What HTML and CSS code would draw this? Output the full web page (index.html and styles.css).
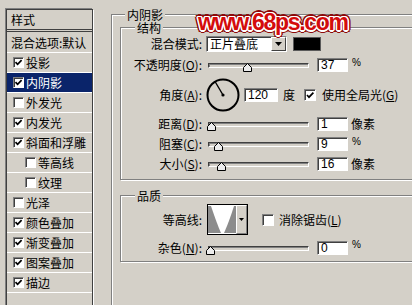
FILE: index.html
```html
<!DOCTYPE html>
<html lang="zh-CN">
<head>
<meta charset="utf-8">
<title>图层样式 - 内阴影</title>
<link rel="stylesheet" href="styles.css">
</head>
<body>
<div class="dialog">
  <div class="styles-list">
    <div class="list-head">样式</div>
    <div class="row blend">混合选项:默认</div>
    <div class="row"><span class="cb"><svg viewBox="0 0 9 9"><path d="M1.5 4.2 L3.6 6.3 L7.6 2.2"/></svg></span>投影</div>
    <div class="row sel"><span class="cb"><svg viewBox="0 0 9 9"><path d="M1.5 4.2 L3.6 6.3 L7.6 2.2"/></svg></span>内阴影</div>
    <div class="row"><span class="cb"></span>外发光</div>
    <div class="row"><span class="cb"><svg viewBox="0 0 9 9"><path d="M1.5 4.2 L3.6 6.3 L7.6 2.2"/></svg></span>内发光</div>
    <div class="row"><span class="cb"><svg viewBox="0 0 9 9"><path d="M1.5 4.2 L3.6 6.3 L7.6 2.2"/></svg></span>斜面和浮雕</div>
    <div class="row sub"><span class="cb"></span>等高线</div>
    <div class="row sub"><span class="cb"></span>纹理</div>
    <div class="row"><span class="cb"></span>光泽</div>
    <div class="row"><span class="cb"><svg viewBox="0 0 9 9"><path d="M1.5 4.2 L3.6 6.3 L7.6 2.2"/></svg></span>颜色叠加</div>
    <div class="row"><span class="cb"><svg viewBox="0 0 9 9"><path d="M1.5 4.2 L3.6 6.3 L7.6 2.2"/></svg></span>渐变叠加</div>
    <div class="row"><span class="cb"><svg viewBox="0 0 9 9"><path d="M1.5 4.2 L3.6 6.3 L7.6 2.2"/></svg></span>图案叠加</div>
    <div class="row"><span class="cb"><svg viewBox="0 0 9 9"><path d="M1.5 4.2 L3.6 6.3 L7.6 2.2"/></svg></span>描边</div>
  </div>

  <div class="main">
    <div class="group outer">
      <div class="legend">内阴影</div>

      <div class="group inner struct">
        <div class="legend">结构</div>

        <div class="frow r-mode">
          <div class="lab">混合模式:</div>
          <div class="select"><span class="sval">正片叠底</span><span class="sbtn"><svg viewBox="0 0 7 4"><path d="M0 0 H7 L3.5 4 Z"/></svg></span></div>
          <div class="swatch"></div>
        </div>

        <div class="frow r-std">
          <div class="lab">不透明度(<u>O</u>):</div>
          <div class="slider"><div class="track"></div><svg class="thumb" style="left:35px" viewBox="0 0 9 9"><path d="M4.5 0.5 L8.5 4.5 V8.5 H0.5 V4.5 Z"/></svg></div>
          <div class="field">37</div>
          <div class="unit pct">%</div>
        </div>

        <div class="frow r-angle">
          <div class="lab">角度(<u>A</u>):</div>
          <svg class="dial" viewBox="0 0 34 34"><circle cx="17" cy="17" r="15.5"/><line x1="17" y1="17" x2="9" y2="3.5"/><circle class="dot" cx="17" cy="17" r="1.6"/></svg>
          <div class="field angle">120</div>
          <div class="unit deg">度</div>
          <span class="cb big"><svg viewBox="0 0 10 10"><path d="M2 5 L4 7.2 L8.4 2.6"/></svg></span>
          <div class="cblab">使用全局光(<u>G</u>)</div>
        </div>

        <div class="frow r-std">
          <div class="lab">距离(<u>D</u>):</div>
          <div class="slider"><div class="track"></div><svg class="thumb" style="left:-1px" viewBox="0 0 9 9"><path d="M4.5 0.5 L8.5 4.5 V8.5 H0.5 V4.5 Z"/></svg></div>
          <div class="field">1</div>
          <div class="unit px">像素</div>
        </div>

        <div class="frow r-std">
          <div class="lab">阻塞(<u>C</u>):</div>
          <div class="slider"><div class="track"></div><svg class="thumb" style="left:6px" viewBox="0 0 9 9"><path d="M4.5 0.5 L8.5 4.5 V8.5 H0.5 V4.5 Z"/></svg></div>
          <div class="field">9</div>
          <div class="unit pct">%</div>
        </div>

        <div class="frow r-std">
          <div class="lab">大小(<u>S</u>):</div>
          <div class="slider"><div class="track"></div><svg class="thumb" style="left:9px" viewBox="0 0 9 9"><path d="M4.5 0.5 L8.5 4.5 V8.5 H0.5 V4.5 Z"/></svg></div>
          <div class="field">16</div>
          <div class="unit px">像素</div>
        </div>
      </div>

      <div class="group inner quality">
        <div class="legend">品质</div>

        <div class="frow r-contour">
          <div class="lab">等高线:</div>
          <div class="contour">
            <span class="cprev"><svg viewBox="0 0 28 27"><rect width="28" height="27" fill="#8c8c8c"/><path d="M3 0 Q9 18 13 27 L16 27 Q21 16 26 0 Z" fill="#fff"/></svg></span>
            <span class="cbtn"><svg viewBox="0 0 5 3"><path d="M0 0 H5 L2.5 3 Z"/></svg></span>
          </div>
          <span class="cb big anti"></span>
          <div class="cblab">消除锯齿(<u>L</u>)</div>
        </div>

        <div class="frow r-noise">
          <div class="lab">杂色(<u>N</u>):</div>
          <div class="slider"><div class="track"></div><svg class="thumb" style="left:-2px" viewBox="0 0 9 9"><path d="M4.5 0.5 L8.5 4.5 V8.5 H0.5 V4.5 Z"/></svg></div>
          <div class="field">0</div>
          <div class="unit pct">%</div>
        </div>
      </div>
    </div>
  </div>

  <div class="watermark">www.68ps.com</div>
</div>
</body>
</html>
```

FILE: styles.css
```css
* { box-sizing: border-box; }
html, body { margin: 0; padding: 0; }
body {
  width: 412px;
  height: 305px;
  overflow: hidden;
  background: #d4d0c8;
  font-family: "Noto Sans CJK SC", "Liberation Sans", sans-serif;
  font-size: 12px;
  color: #000;
}
.dialog {
  position: relative;
  display: flex;
  align-items: flex-start;
  width: 412px;
  height: 305px;
  overflow: hidden;
}

/* ---------- left style list ---------- */
.styles-list {
  flex: none;
  margin: 9px 0 0 6px;
  width: 87px;
  height: 320px;
  border: 1px solid #404040;
  box-shadow: -1px -1px 0 #808080, 1px 1px 0 #ffffff;
}
.list-head {
  height: 22px;
  line-height: 19px;
  padding-left: 4px;
  border-bottom: 3px double #404040;
}
.row {
  display: flex;
  align-items: center;
  height: 20px;
  padding-left: 6px;
  border-bottom: 1px solid #ffffff;
  line-height: 19px;
  white-space: nowrap;
}
.row.blend { height: 21px; padding-left: 4px; }
.row.sub { padding-left: 18px; }
.row.sel { background: #0a246a; color: #ffffff; }

.cb {
  flex: none;
  display: block;
  width: 11px;
  height: 11px;
  margin-right: 2px;
  background: #ffffff;
  border: 1px solid;
  border-color: #808080 #ffffff #ffffff #808080;
  box-shadow: inset 1px 1px 0 #404040;
}
.cb svg { display: block; width: 9px; height: 9px; }
.cb path { fill: none; stroke: #000; stroke-width: 1.7; }
.cb.big { width: 12px; height: 12px; margin-right: 0; }
.cb.big svg { width: 10px; height: 10px; }

/* ---------- right side groups ---------- */
.main { flex: none; margin-left: 18px; }
.group {
  border: 1px solid #808080;
  box-shadow: inset 1px 1px 0 #ffffff, 1px 1px 0 #ffffff;
}
.outer {
  margin-top: 14px;
  width: 330px;
  height: 320px;
}
.legend {
  width: fit-content;
  height: 13px;
  line-height: 13px;
  margin: -7px 0 1px 13px;
  padding: 0 2px;
  background: #d4d0c8;
  white-space: nowrap;
}
.inner {
  margin-left: 8px;
  width: 330px;
}
.inner .legend { margin-left: 14px; }
.struct { margin-top: 6px; padding-bottom: 8px; }
.quality { margin-top: 15px; padding-bottom: 6px; }

.frow { display: flex; align-items: center; white-space: nowrap; }
.lab { flex: none; width: 81px; text-align: right; line-height: 14px; }
.lab u, .cblab u { text-decoration: underline; text-underline-offset: 1px; }

.r-mode { margin-top: 2px; height: 16px; }
.r-std { margin-top: 6px; height: 14px; }
.r-angle { margin-top: 6px; height: 33px; }
.r-contour { margin-top: 2px; height: 31px; }
.r-noise { margin-top: 5px; height: 15px; }

.select {
  flex: none;
  display: flex;
  margin-left: 4px;
  width: 81px;
  height: 16px;
  background: #ffffff;
  border: 1px solid;
  border-color: #808080 #ffffff #ffffff #808080;
  box-shadow: inset 1px 1px 0 #404040;
}
.sval { flex: 1; padding-left: 3px; line-height: 14px; }
.sbtn {
  flex: none;
  display: flex;
  align-items: center;
  justify-content: center;
  width: 15px;
  height: 14px;
  background: #d4d0c8;
  border: 1px solid;
  border-color: #ffffff #404040 #404040 #ffffff;
}
.sbtn svg { width: 7px; height: 4px; }
.sbtn path, .cbtn path { fill: #000; }
.swatch {
  flex: none;
  margin-left: 6px;
  width: 28px;
  height: 14px;
  background: #000;
  border: 1px solid #5a5a5a;
}

.slider {
  flex: none;
  position: relative;
  width: 101px;
  height: 14px;
  margin-left: 6px;
  padding-top: 5px;
}
.track {
  height: 5px;
  background: #d4d0c8;
  border: 1px solid;
  border-color: #404040 #ffffff #ffffff #404040;
  box-shadow: inset 1px 1px 0 #808080;
}
.thumb {
  position: absolute;
  top: 5px;
  width: 9px;
  height: 9px;
}
.thumb path { fill: #ececec; stroke: #000; stroke-width: 1; }

.field {
  flex: none;
  margin-left: 8px;
  width: 31px;
  height: 14px;
  padding-left: 3px;
  background: #ffffff;
  border: 1px solid;
  border-color: #808080 #ffffff #ffffff #808080;
  box-shadow: inset 1px 1px 0 #404040;
  font-family: "Liberation Sans", sans-serif;
  font-size: 12px;
  line-height: 12px;
}
.field.angle { margin-left: 4px; width: 34px; }
.unit { flex: none; margin-left: 4px; line-height: 14px; }
.unit.pct { font-family: "Liberation Sans", sans-serif; font-size: 10px; align-self: flex-start; line-height: 10px; }
.unit.px { margin-left: 3px; }
.unit.deg { margin-left: 5px; margin-right: 9px; }

.dial { flex: none; margin-left: 4px; width: 34px; height: 34px; }
.dial circle { fill: none; stroke: #000; stroke-width: 2; }
.dial line { stroke: #000; stroke-width: 1.4; }
.dial .dot { fill: #000; stroke: none; }

.cblab { flex: none; margin-left: 6px; line-height: 14px; }
.r-contour .cblab { margin-left: 5px; }

.contour {
  flex: none;
  display: flex;
  margin-left: 5px;
  width: 41px;
  height: 31px;
  border: 1px solid #000;
  background: #ffffff;
}
.cprev { display: block; width: 28px; height: 29px; padding: 1px 0 1px 0; }
.cprev svg { display: block; width: 28px; height: 27px; }
.cbtn {
  flex: none;
  display: flex;
  align-items: center;
  justify-content: center;
  width: 11px;
  height: 29px;
  background: #d4d0c8;
  border: 1px solid;
  border-color: #ffffff #808080 #808080 #ffffff;
}
.cbtn svg { width: 5px; height: 3px; }
.anti { margin-left: 14px; }

/* ---------- watermark overlay ---------- */
.watermark {
  position: absolute;
  left: 198px;
  top: 7px;
  font-family: "Liberation Sans", sans-serif;
  font-weight: bold;
  font-size: 23px;
  line-height: 30px;
  letter-spacing: -1.3px;
  color: #d40c0c;
  white-space: nowrap;
  text-shadow:
    -1.5px 0 0 #fff, 1.5px 0 0 #fff, 0 -1.5px 0 #fff, 0 1.5px 0 #fff,
    -1px -1px 0 #fff, 1px -1px 0 #fff, -1px 1px 0 #fff, 1px 1px 0 #fff,
    -3px 0 0 #8c0a0a, 3px 0 0 #8c0a0a, 0 -3px 0 #8c0a0a, 0 3px 0 #8c0a0a,
    -2.2px -2.2px 0 #8c0a0a, 2.2px -2.2px 0 #8c0a0a, -2.2px 2.2px 0 #8c0a0a, 2.2px 2.2px 0 #8c0a0a,
    0 0 3px #8c0a0a;
}
```
